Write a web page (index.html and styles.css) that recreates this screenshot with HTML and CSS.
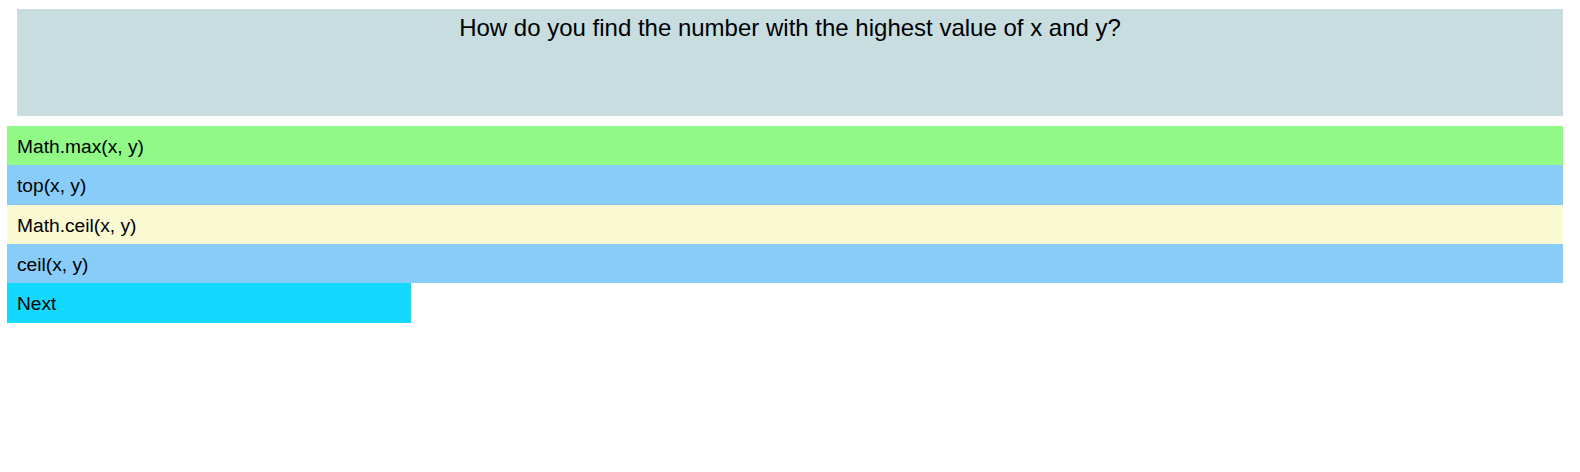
FILE: index.html
```html
<!DOCTYPE html>
<html>
<head>
<meta charset="utf-8">
<link rel="stylesheet" href="styles.css">
</head>
<body>
<div class="quiz">
  <div class="question">How do you find the number with the highest value of x and y?</div>
  <div class="answers">
    <div class="answer correct">Math.max(x, y)</div>
    <div class="answer blue">top(x, y)</div>
    <div class="answer yellow">Math.ceil(x, y)</div>
    <div class="answer blue">ceil(x, y)</div>
  </div>
  <div class="next">Next</div>
</div>
</body>
</html>
```
FILE: styles.css
```css
html, body {
  margin: 0;
  padding: 0;
  background: #ffffff;
}
body {
  font-family: "Liberation Sans", Arial, sans-serif;
  color: #000;
}
.quiz {
  display: flex;
  flex-direction: column;
  padding: 9px 17px 0 7px;
}
.question {
  margin-left: 10px;
  height: 107px;
  box-sizing: border-box;
  padding-top: 5px;
  background: #c7dde0;
  font-size: 24px;
  text-align: center;
}
.answers {
  margin-top: 10px;
  display: flex;
  flex-direction: column;
}
.answer, .next {
  height: 39.333px;
  box-sizing: border-box;
  line-height: 37.333px;
  padding: 2px 10px 0 10px;
  font-size: 19.2px;
  white-space: nowrap;
}
.correct { background: #91f986; }
.blue { background: #88cdf9; }
.yellow { background: #f9f9d2; }
.next {
  width: 404px;
  background: #13d9ff;
}
```
